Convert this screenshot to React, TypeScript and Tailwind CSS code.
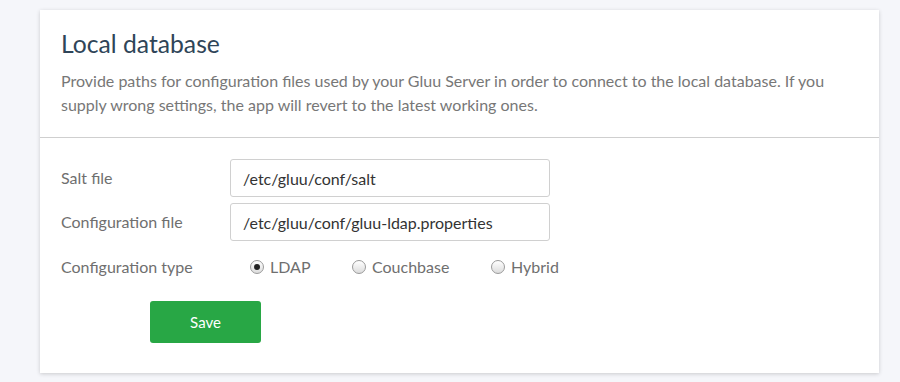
import { useState } from 'react'

const font = { fontFamily: 'Lato, "Open Sans", sans-serif' }

function Radio({ label, checked, onClick }: { label: string; checked: boolean; onClick: () => void }) {
  return (
    <label className="flex items-center gap-[6px] cursor-pointer" onClick={onClick}>
      <span className="relative w-[14px] h-[14px] rounded-full border border-[#9a9a9a] bg-gradient-to-b from-[#ffffff] to-[#dcdcdc] flex items-center justify-center">
        {checked && <span className="w-[6px] h-[6px] rounded-full bg-[#222]" />}
      </span>
      <span className="text-[16px] text-[#6f6f6f]">{label}</span>
    </label>
  )
}

export default function App() {
  const [type, setType] = useState('LDAP')

  return (
    <div className="w-[900px] h-[382px] bg-[#f5f6fa] pt-[10px] pl-[40px] overflow-hidden" style={font}>
      <div className="w-[839px] h-[363px] bg-white shadow-[0_1px_4px_rgba(0,0,0,0.18)]">
        <div className="px-[21px] pt-[19px] pb-[20px] border-b border-[#cfcfcf]">
          <h1 className="text-[24.7px] leading-[30px] text-[#2f4558]">Local database</h1>
          <p className="mt-[10px] text-[16px] leading-[24px] text-[#777]">
            Provide paths for configuration files used by your Gluu Server in order to connect to the local database. If you supply wrong settings, the app will revert to the latest working ones.
          </p>
        </div>

        <div className="px-[21px] pt-[21px] flex flex-col">
          <div className="flex items-center h-[38px]">
            <span className="w-[169px] text-[16px] text-[#6f6f6f]">Salt file</span>
            <input
              defaultValue="/etc/gluu/conf/salt"
              className="w-[320px] h-[38px] px-[12px] border border-[#d0d0d0] rounded-[3px] text-[16px] text-[#333] outline-none"
              style={font}
            />
          </div>
          <div className="flex items-center h-[38px] mt-[6px]">
            <span className="w-[169px] text-[16px] text-[#6f6f6f]">Configuration file</span>
            <input
              defaultValue="/etc/gluu/conf/gluu-ldap.properties"
              className="w-[320px] h-[38px] px-[12px] border border-[#d0d0d0] rounded-[3px] text-[16px] text-[#333] outline-none"
              style={font}
            />
          </div>
          <div className="flex items-center h-[26px] mt-[13px]">
            <span className="w-[189px] text-[16px] text-[#6f6f6f]">Configuration type</span>
            <div className="flex items-center">
              <div className="w-[102px]">
                <Radio label="LDAP" checked={type === 'LDAP'} onClick={() => setType('LDAP')} />
              </div>
              <div className="w-[139px]">
                <Radio label="Couchbase" checked={type === 'Couchbase'} onClick={() => setType('Couchbase')} />
              </div>
              <Radio label="Hybrid" checked={type === 'Hybrid'} onClick={() => setType('Hybrid')} />
            </div>
          </div>
          <div className="pl-[89px] mt-[21px]">
            <button className="w-[111px] h-[42px] rounded-[3px] bg-[#28a745] text-white text-[15px]" style={font}>
              Save
            </button>
          </div>
        </div>
      </div>
    </div>
  )
}
